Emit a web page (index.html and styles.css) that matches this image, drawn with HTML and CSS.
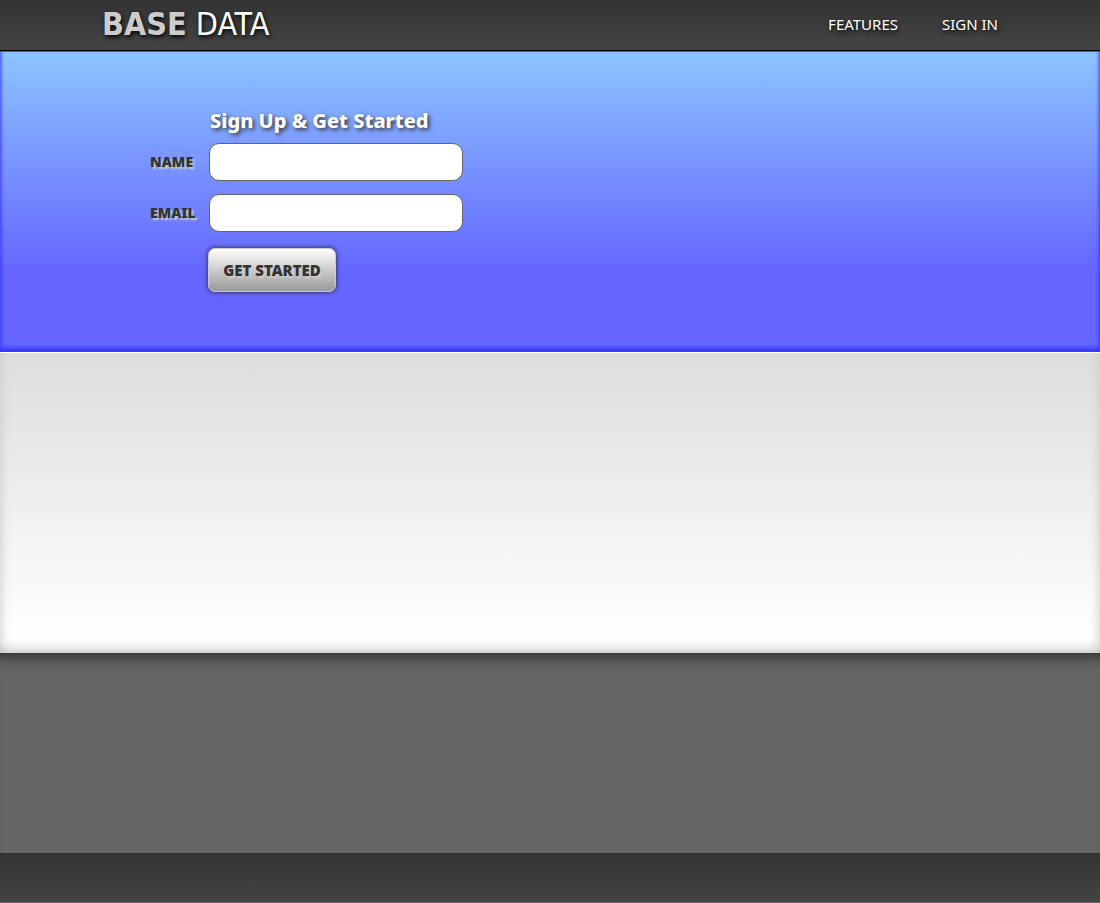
FILE: index.html
```html
<!DOCTYPE html>
<html lang="en">
<head>
<meta charset="utf-8">
<title>Base Data</title>
<link rel="stylesheet" href="styles.css">
</head>
<body>
<header class="site-header">
  <div class="container header-row">
    <a class="logo" href="#"><strong>BASE</strong> DATA</a>
    <nav class="nav">
      <a href="#features">FEATURES</a>
      <a href="#signin">SIGN IN</a>
    </nav>
  </div>
</header>
<main>
  <section class="hero">
    <div class="container">
      <form class="signup">
        <h1 class="signup-title">Sign Up &amp; Get Started</h1>
        <label for="name">NAME</label>
        <input id="name" name="name" type="text">
        <label for="email">EMAIL</label>
        <input id="email" name="email" type="email">
        <button class="signup-button" type="submit">GET STARTED</button>
      </form>
    </div>
  </section>
  <section class="features" id="features"></section>
  <section class="details"></section>
</main>
<footer class="site-footer"></footer>
</body>
</html>
```
FILE: styles.css
```css
* {
  box-sizing: border-box;
}

body {
  margin: 0;
  background: #666;
  color: #333;
  font-family: "Noto Sans", Tahoma, sans-serif;
}

.container {
  max-width: 900px;
  margin: 0 auto;
}

.site-header {
  border-bottom: 1px solid #000;
  background: linear-gradient(#333, #444);
}

.header-row {
  display: flex;
  align-items: center;
  justify-content: space-between;
  height: 50px;
  padding: 0 2px 2px;
}

.logo {
  color: #fff;
  font-family: "DejaVu Sans Condensed", Tahoma, sans-serif;
  font-size: 32px;
  line-height: 46px;
  text-decoration: none;
  text-shadow: 1px 2px 4px #000;
}

.logo strong {
  color: #ccc;
}

.nav {
  display: flex;
  gap: 44px;
}

.nav a {
  color: #fff;
  font-size: 15px;
  line-height: 20px;
  text-decoration: none;
  text-shadow: 1px 2px 4px #000;
}

.hero {
  min-height: 301px;
  padding: 55px 0;
  border-top: 1px solid #1a66ff;
  background: linear-gradient(#8cc4ff, #66f 73%);
  box-shadow: inset 0 -5px 5px -1px #33f, inset 4px 0 4px -4px #33f, inset -4px 0 4px -4px #33f;
}

.signup {
  display: grid;
  grid-template-columns: 59px 254px;
  align-items: center;
  row-gap: 13px;
  margin-left: 50px;
}

.signup-title {
  grid-column: 2;
  margin: 0 0 -5px 1px;
  color: #fff;
  font-size: 20px;
  font-weight: 800;
  line-height: 28px;
  white-space: nowrap;
  text-shadow: 2px 2px 4px #333;
}

.signup label {
  font-size: 14px;
  line-height: 20px;
  font-weight: 900;
  text-shadow: 2px 2px 2px #ccc;
}

.signup input {
  width: 100%;
  height: 38px;
  padding: 0 10px;
  border: 1px solid #666;
  border-radius: 10px;
  background: #fff;
  font: inherit;
}

.signup-button {
  grid-column: 2;
  justify-self: start;
  height: 44px;
  min-width: 128px;
  margin: 3px 0 0 -1px;
  padding: 0 12px;
  border: 1px solid #ccc;
  border-radius: 7px;
  background: linear-gradient(#fff, #999);
  box-shadow: 0 0 5px #222;
  color: #333;
  font-family: inherit;
  font-size: 15px;
  line-height: 20px;
  font-weight: 900;
  text-shadow: 2px 2px 2px #ccc;
}

.features {
  min-height: 301px;
  border-top: 1px solid #fff;
  background: linear-gradient(#ddd, #fff 95%);
  box-shadow: inset 0 -12px 16px -12px #aaa, inset 12px 0 12px -12px #ccc, inset -12px 0 12px -12px #ccc;
}

.details {
  min-height: 200px;
  background: #666;
  box-shadow: inset 0 16px 16px -14px #222;
}

.site-footer {
  height: 50px;
  border-bottom: 1px solid #666;
  background: linear-gradient(#333, #444);
}
```
